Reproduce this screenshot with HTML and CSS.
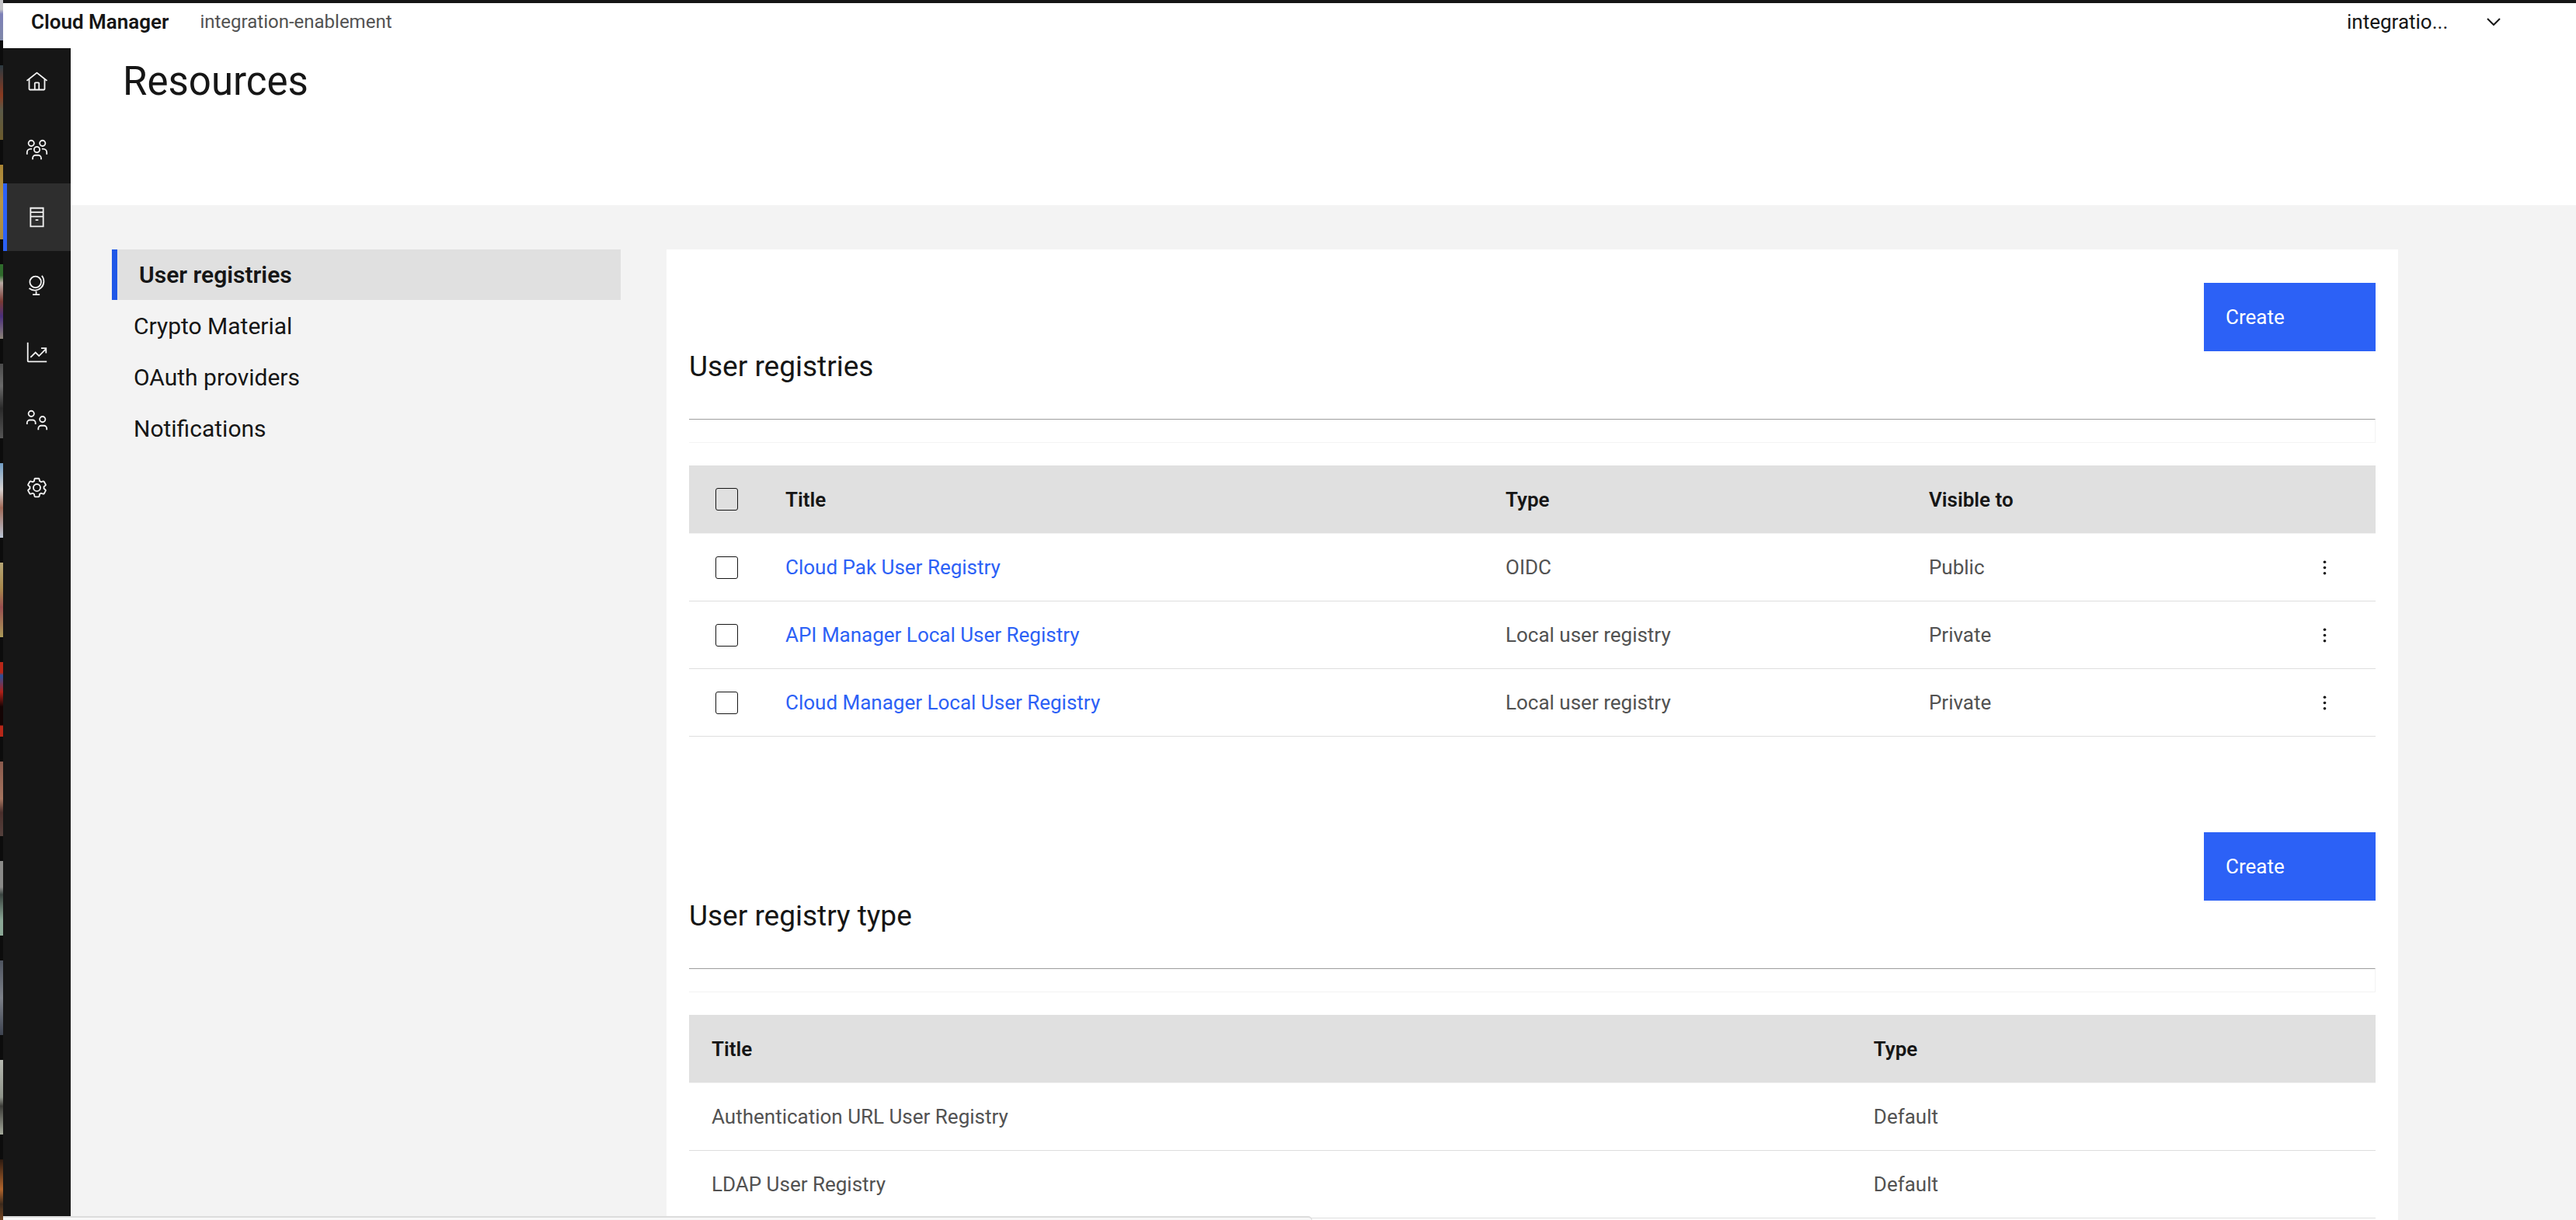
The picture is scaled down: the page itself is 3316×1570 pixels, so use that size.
FILE: index.html
```html
<!DOCTYPE html>
<html lang="en">
<head>
  <meta charset="utf-8">
  <title>Cloud Manager - Resources</title>
  <link rel="stylesheet" href="styles.css">
</head>
<body>
  <div class="desktop" aria-hidden="true">
    <span class="thumb thumb-sky"></span>
    <span class="thumb thumb-dusk"></span>
    <span class="thumb thumb-gold"></span>
    <span class="thumb thumb-crowd"></span>
    <span class="thumb thumb-mono"></span>
    <span class="thumb thumb-pale"></span>
    <span class="thumb thumb-sand"></span>
    <span class="thumb thumb-red"></span>
    <span class="thumb thumb-brown"></span>
    <span class="thumb thumb-mint"></span>
    <span class="thumb thumb-slate"></span>
    <span class="thumb thumb-stone"></span>
    <span class="thumb thumb-orange"></span>
  </div>

  <div class="window">
    <header class="topbar">
      <div class="brand">
        <span class="brand-name">Cloud Manager</span>
        <span class="brand-instance">integration-enablement</span>
      </div>
      <div class="account">
        <select class="account-select" aria-label="Organization">
          <option>integratio...</option>
        </select>
        <svg class="chevron" viewBox="0 0 18 10" aria-hidden="true"><path d="M1 1l8 8 8-8"/></svg>
      </div>
    </header>

    <div class="shell">
      <nav class="rail" aria-label="Main">
        <a class="rail-item" href="#home" aria-label="Home">
          <svg class="icon" viewBox="0 0 32 32"><path class="solid" d="M16.6123,2.2138a1.01,1.01,0,0,0-1.2427,0L1,13.4194l1.2427,1.5717L4,13.6209V26a2.0041,2.0041,0,0,0,2,2H26a2.0037,2.0037,0,0,0,2-2V13.63L29.7573,15,31,13.4282ZM18,26H14V18h4Zm2,0V18a2.0023,2.0023,0,0,0-2-2H14a2.002,2.002,0,0,0-2,2v8H6V12.0615l10-7.79,10,7.8005V26Z"/></svg>
        </a>
        <a class="rail-item" href="#organizations" aria-label="Provider organizations">
          <svg class="icon" viewBox="0 0 32 32"><circle cx="8" cy="7" r="4"/><circle cx="24" cy="7" r="4"/><circle cx="16" cy="16" r="4"/><path d="M2 23v-3a5 5 0 0 1 5-5h2M30 23v-3a5 5 0 0 0-5-5h-2M10 30v-2a4 4 0 0 1 4-4h4a4 4 0 0 1 4 4v2"/></svg>
        </a>
        <a class="rail-item is-active" href="#resources" aria-label="Resources" aria-current="page">
          <svg class="icon" viewBox="0 0 32 32"><path d="M7 3h18v26H7zM7 9h18M7 15h18M14 20h4"/></svg>
        </a>
        <a class="rail-item" href="#topology" aria-label="Topology">
          <svg class="icon" viewBox="0 0 32 32"><circle cx="14" cy="12" r="8"/><path d="M23 3a12.8 12.8 0 0 1-18 18M15 25v5M10 30h10"/></svg>
        </a>
        <a class="rail-item" href="#analytics" aria-label="Analytics">
          <svg class="icon" viewBox="0 0 32 32"><path d="M3 2v26a1 1 0 0 0 1 1h26M7 23l7-7 5 5 10-10M22 10h7v7"/></svg>
        </a>
        <a class="rail-item" href="#members" aria-label="Members">
          <svg class="icon" viewBox="0 0 32 32"><circle cx="8" cy="7" r="4"/><circle cx="24" cy="15" r="4"/><path d="M2 22v-2a4 4 0 0 1 4-4h4a4 4 0 0 1 4 4v2M18 30v-2a4 4 0 0 1 4-4h4a4 4 0 0 1 4 4v2"/></svg>
        </a>
        <a class="rail-item" href="#settings" aria-label="Settings">
          <svg class="icon" viewBox="0 0 32 32"><circle cx="16" cy="16" r="5"/><path class="solid" d="M27,16.76c0-.25,0-.5,0-.76s0-.51,0-.77l1.92-1.68A2,2,0,0,0,29.3,11L26.94,7a2,2,0,0,0-1.73-1,2,2,0,0,0-.64.1l-2.43.82a11.35,11.35,0,0,0-1.31-.75l-.51-2.52a2,2,0,0,0-2-1.61H13.64a2,2,0,0,0-2,1.61l-.51,2.52a11.48,11.48,0,0,0-1.32.75L7.43,6.06A2,2,0,0,0,6.79,6,2,2,0,0,0,5.06,7L2.7,11a2,2,0,0,0,.41,2.51L5,15.24c0,.25,0,.5,0,.76s0,.51,0,.77L3.11,18.45A2,2,0,0,0,2.7,21L5.06,25a2,2,0,0,0,1.73,1,2,2,0,0,0,.64-.1l2.43-.82a11.35,11.35,0,0,0,1.31.75l.51,2.52a2,2,0,0,0,2,1.61h4.72a2,2,0,0,0,2-1.61l.51-2.52a11.48,11.48,0,0,0,1.32-.75l2.42.82a2,2,0,0,0,.64.1,2,2,0,0,0,1.73-1L29.3,21a2,2,0,0,0-.41-2.51ZM25.21,24l-3.43-1.16a8.86,8.86,0,0,1-2.71,1.57L18.36,28H13.64l-.71-3.55a9.36,9.36,0,0,1-2.7-1.57L6.79,24,4.43,20l2.72-2.4a8.9,8.9,0,0,1,0-3.13L4.43,12,6.79,8l3.43,1.16a8.86,8.86,0,0,1,2.71-1.57L13.64,4h4.72l.71,3.55a9.36,9.36,0,0,1,2.7,1.57L25.21,8,27.57,12l-2.72,2.4a8.9,8.9,0,0,1,0,3.13L27.57,20Z"/></svg>
        </a>
      </nav>

      <main class="main">
        <div class="page-header">
          <h1 class="page-title">Resources</h1>
        </div>

        <div class="page-body">
          <nav class="side" aria-label="Resources">
            <a class="side-item is-current" href="#user-registries" aria-current="true">User registries</a>
            <a class="side-item" href="#crypto">Crypto Material</a>
            <a class="side-item" href="#oauth">OAuth providers</a>
            <a class="side-item" href="#notifications">Notifications</a>
          </nav>

          <div class="card">
            <section class="section">
              <div class="section-actions"><button class="create" type="button">Create</button></div>
              <h2 class="section-title">User registries</h2>
              <hr class="rule">
              <table class="data">
                <colgroup>
                  <col class="col-check"><col class="col-title"><col class="col-type"><col><col class="col-menu">
                </colgroup>
                <thead>
                  <tr>
                    <th class="cell-check"><input class="check" type="checkbox" aria-label="Select all"></th>
                    <th scope="col">Title</th>
                    <th scope="col">Type</th>
                    <th scope="col">Visible to</th>
                    <th></th>
                  </tr>
                </thead>
                <tbody>
                  <tr>
                    <td class="cell-check"><input class="check" type="checkbox" aria-label="Select Cloud Pak User Registry"></td>
                    <td><a class="link" href="#cloud-pak">Cloud Pak User Registry</a></td>
                    <td>OIDC</td>
                    <td>Public</td>
                    <td class="cell-menu"><button class="menu" type="button" aria-label="Options"><svg class="dots" viewBox="0 0 32 32"><circle cx="16" cy="8" r="2"/><circle cx="16" cy="16" r="2"/><circle cx="16" cy="24" r="2"/></svg></button></td>
                  </tr>
                  <tr>
                    <td class="cell-check"><input class="check" type="checkbox" aria-label="Select API Manager Local User Registry"></td>
                    <td><a class="link" href="#api-manager">API Manager Local User Registry</a></td>
                    <td>Local user registry</td>
                    <td>Private</td>
                    <td class="cell-menu"><button class="menu" type="button" aria-label="Options"><svg class="dots" viewBox="0 0 32 32"><circle cx="16" cy="8" r="2"/><circle cx="16" cy="16" r="2"/><circle cx="16" cy="24" r="2"/></svg></button></td>
                  </tr>
                  <tr>
                    <td class="cell-check"><input class="check" type="checkbox" aria-label="Select Cloud Manager Local User Registry"></td>
                    <td><a class="link" href="#cloud-manager">Cloud Manager Local User Registry</a></td>
                    <td>Local user registry</td>
                    <td>Private</td>
                    <td class="cell-menu"><button class="menu" type="button" aria-label="Options"><svg class="dots" viewBox="0 0 32 32"><circle cx="16" cy="8" r="2"/><circle cx="16" cy="16" r="2"/><circle cx="16" cy="24" r="2"/></svg></button></td>
                  </tr>
                </tbody>
              </table>
            </section>

            <section class="section">
              <div class="section-actions"><button class="create" type="button">Create</button></div>
              <h2 class="section-title">User registry type</h2>
              <hr class="rule">
              <table class="data">
                <colgroup><col class="col-wide"><col></colgroup>
                <thead>
                  <tr><th scope="col">Title</th><th scope="col">Type</th></tr>
                </thead>
                <tbody>
                  <tr><td>Authentication URL User Registry</td><td>Default</td></tr>
                  <tr><td>LDAP User Registry</td><td>Default</td></tr>
                </tbody>
              </table>
            </section>
          </div>
        </div>
      </main>
    </div>
  </div>

  <div class="status" aria-hidden="true"></div>
</body>
</html>
```

FILE: styles.css
```css
* {
  box-sizing: border-box;
}

body {
  margin: 0;
  height: 100vh;
  display: flex;
  overflow: hidden;
  background: #0c0c0c;
  color: #161616;
  font-family: Roboto, "Liberation Sans", sans-serif;
  font-size: 26px;
}

a {
  color: inherit;
  text-decoration: none;
}

/* Sliver of the desktop behind the window */
.desktop {
  flex: none;
  width: 4px;
  display: flex;
  flex-direction: column;
  gap: 32px;
  overflow: hidden;
}

.thumb {
  flex: none;
  height: 96px;
}

.thumb-sky { height: 52px; background: linear-gradient(#c4c4c8 12px, #7d80b8 18px, #7f88a8); }
.thumb-dusk { background: linear-gradient(#2b3a42, #8a3a20 40%, #5b5a48 60%, #6b5a2c); }
.thumb-gold { background: linear-gradient(#a98535, #b89545 50%, #a8883f); }
.thumb-crowd { background: linear-gradient(#2f6b2c 15%, #b9aaa4 25%, #7a3a34 50%, #4b2f7c 70%, #8b8378); }
.thumb-mono { background: linear-gradient(#4a4a4a, #6a6a6a 30%, #2a2a2a 60%, #555555); }
.thumb-pale { background: linear-gradient(#6f9cc4, #d7d2d0 35%, #a06a58 60%, #b9c4d4); }
.thumb-sand { background: linear-gradient(#b5a574, #a8884c 35%, #9a4f50 60%, #ab9a58); }
.thumb-red { background: linear-gradient(#b82718 14%, #2b4f9c 18%, #b02018 40%, #140404 60%, #140404 84%, #b82718 86%); }
.thumb-brown { background: linear-gradient(#8a5a4c, #a5745f 50%, #4a2f2c 68%, #54403c); }
.thumb-mint { background: linear-gradient(#8a8a88 35%, #3a4440 45%, #8ba896 80%); }
.thumb-slate { background: linear-gradient(#4e5460, #7c8088 50%, #3d4350); }
.thumb-stone { background: linear-gradient(#b5b8b0, #8f948a 50%, #3c3c38 62%, #a5aa9c); }
.thumb-orange { background: linear-gradient(#2c1a10, #b0642c 40%, #3c2a1c 60%, #a8622c); }

.window {
  flex: 1;
  min-width: 0;
  display: flex;
  flex-direction: column;
  border-top: 4px solid #161616;
  background: #ffffff;
}

/* Top bar */
.topbar {
  flex: none;
  display: flex;
  justify-content: space-between;
  align-items: center;
  height: 58px;
  padding: 0 97px 10px 36px;
}

.brand {
  display: flex;
  align-items: center;
  gap: 40px;
}

.brand-name {
  font-weight: 600;
}

.brand-instance {
  font-size: 24px;
  color: #525252;
}

.account {
  display: flex;
  align-items: center;
}

.account-select {
  appearance: none;
  width: 180px;
  padding: 0;
  border: 0;
  background: none;
  color: inherit;
  font: inherit;
}

.chevron {
  width: 18px;
  height: 10px;
  fill: none;
  stroke: #161616;
  stroke-width: 2;
}

.shell {
  flex: 1;
  min-height: 0;
  display: flex;
}

/* Icon rail */
.rail {
  flex: none;
  width: 87px;
  background: #161616;
}

.rail-item {
  display: flex;
  align-items: center;
  justify-content: center;
  height: 87px;
  border: 0 solid transparent;
  border-width: 0 5px;
}

.rail-item.is-active {
  border-left-color: #2c61f6;
  background: #2e2e2e;
}

.icon {
  width: 29px;
  height: 29px;
  fill: none;
  stroke: #f3f3f3;
  stroke-width: 2;
}

.icon .solid {
  fill: #f3f3f3;
  stroke: none;
}

/* Page */
.main {
  flex: 1;
  min-width: 0;
  overflow: hidden;
  background: #f3f3f3;
}

.page-header {
  padding: 13px 67px 129px;
  background: #ffffff;
}

.page-title {
  margin: 0;
  font-size: 51px;
  font-weight: 400;
  line-height: 60px;
}

.page-body {
  display: grid;
  grid-template-columns: 655fr 2229fr;
  align-items: start;
  gap: 59px;
  padding: 57px 229px 0 53px;
}

.side {
  display: flex;
  flex-direction: column;
  gap: 1px;
}

.side-item {
  padding-left: 28px;
  font-size: 30px;
  line-height: 65px;
}

.side-item.is-current {
  border-left: 7px solid #1f57e7;
  background: #e0e0e0;
  font-weight: 600;
}

.card {
  padding: 0 29px;
  background: #ffffff;
}

.section {
  padding: 43px 0 80px;
}

.section-actions {
  display: flex;
  justify-content: flex-end;
}

.create {
  width: 221px;
  height: 88px;
  padding: 0 28px;
  border: 0;
  background: #2c61f6;
  color: #ffffff;
  font: inherit;
  text-align: left;
}

.section-title {
  margin: 0 0 47px;
  font-size: 37px;
  font-weight: 400;
  line-height: 40px;
}

.rule {
  height: 31px;
  margin: 0 0 29px;
  border: solid #f3f3f3;
  border-width: 1px 1px 1px 0;
  border-top-color: #9e9e9e;
}

/* Tables */
.data {
  width: 100%;
  table-layout: fixed;
  border-collapse: separate;
  border-spacing: 0;
}

.col-check { width: 95px; }
.col-title { width: 42.7%; }
.col-type { width: 25.1%; }
.col-menu { width: 132px; }
.col-wide { width: 68.9%; }

.data th,
.data td {
  height: 87px;
  padding: 0 29px;
  border-bottom: 1px solid #dedede;
  text-align: left;
}

.data th {
  height: 88px;
  border-bottom-color: #f3f3f3;
  background: #e0e0e0;
  background-clip: padding-box;
  font-weight: 600;
}

.data td {
  color: #525252;
}

.data .cell-check {
  padding: 0 0 0 34px;
}

.data .cell-menu {
  padding: 0;
}

.check {
  appearance: none;
  display: block;
  width: 29px;
  height: 29px;
  margin: 0;
  border: 1px solid #161616;
  border-radius: 3px;
}

.link {
  color: #2c61f6;
}

.menu {
  display: block;
  margin: 0 auto;
  padding: 0;
  border: 0;
  background: none;
}

.dots {
  display: block;
  width: 29px;
  height: 29px;
  fill: #161616;
}

/* Link preview bar over the bottom edge */
.status {
  position: fixed;
  left: 4px;
  bottom: 0;
  width: 50.8%;
  height: 5px;
  border-top: 2px solid #dcdcdc;
  border-right: 1px solid #dcdcdc;
  border-top-right-radius: 5px;
  background: #f8f8f8;
}
```
